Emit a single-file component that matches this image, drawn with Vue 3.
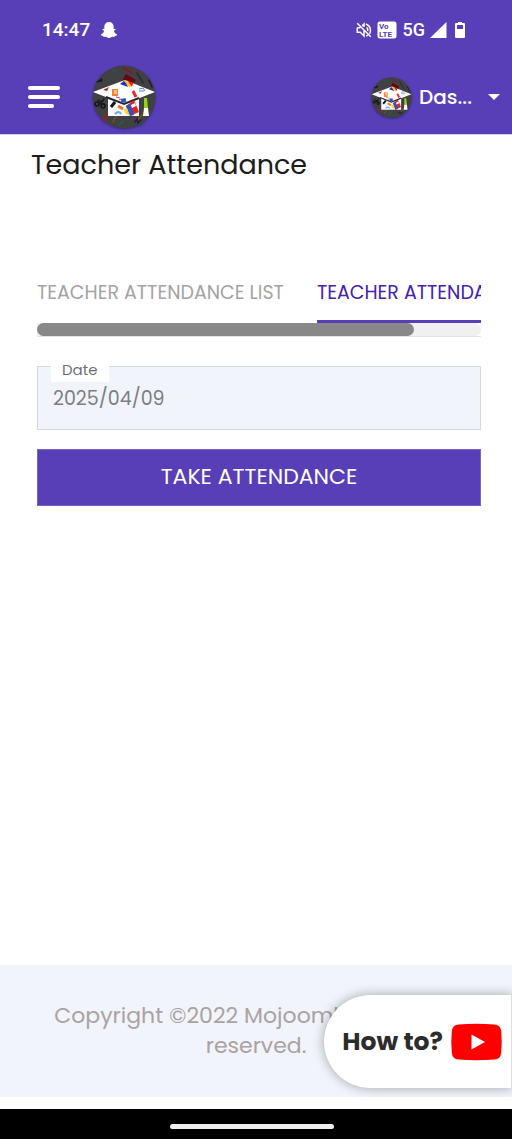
<script setup>
import { ref } from 'vue'

const tabs = ['Teacher Attendance List', 'Teacher Attendance']
const active = ref(1)
const date = ref('2025/04/09')
</script>

<template>
  <div class="page">
    <svg class="defs" aria-hidden="true">
      <symbol id="school-logo" viewBox="0 0 64 64">
        <circle cx="32" cy="32" r="31.5" fill="#414143" />
        <g fill="none" stroke-width="1.5" stroke-linecap="round">
          <path d="M32 3l8 5" stroke="#8d1425" />
          <path d="M45 8l6 10" stroke="#292a2d" />
          <path d="M57 15l3 7M5 17l5-2" stroke="#202124" />
          <path d="M22 6l3-1M48 60l3-2" stroke="#11604e" />
          <path d="M18 43l-5 14M14 50l-3 4" stroke="#8b2528" />
          <path d="M26 48l-5 9M52 48l-7 8" stroke="#6d551e" />
          <path d="M31 56l-4 4" stroke="#18664d" />
          <path d="M6 35l7 5M12 34l-4 5" stroke="#151517" />
          <circle cx="5" cy="39" r="2" stroke="#151517" />
          <circle cx="11" cy="41" r="2" stroke="#151517" />
          <path d="M43 57l2-3 1 4 3-3" stroke="#231b38" />
        </g>
        <path d="M30 16l4-7 10 6-3 5z" fill="#62080e" />
        <path d="M6 16l4-3v4z" fill="#151517" />
        <path d="M16 32l16 7 15-7v19H16z" fill="#f7fafc" />
        <path d="M1 27l32-12 30 12-31 12z" fill="#fff" />
        <path d="M14 32l18 7 15-6" fill="none" stroke="#29292b" stroke-width="2" />
        <path d="M28 19l5-4 3 7z" fill="#1631c9" />
        <path d="M31 15l9 3-2 5z" fill="#ffc21c" />
        <path d="M35 15l6 3-1 4z" fill="#df1d1d" />
        <path d="M20 24h6v7h-6z" fill="#f58032" />
        <path d="M22 26h3m-3 2h3" stroke="#fff" />
        <path d="M11 25l6-3-2 4z" fill="#b82032" />
        <path d="M47 24l4-1 2 3m-6 0h5" fill="none" stroke="#4587d6" />
        <path d="M41 26l3 6" stroke="#df3131" stroke-width="3" />
        <path d="M29 36l5-1" stroke="#3454c5" stroke-width="4" />
        <path d="M24 32l4 1M27 35l2-1" stroke="#dc3c52" />
        <path d="M19 42l4-5" stroke="#151517" stroke-width="3" />
        <path d="M26 41l5 3" stroke="#ed7625" stroke-width="3" />
        <path d="M23 49q4-4 6 0" fill="none" stroke="#70a6dd" stroke-width="2" />
        <path d="M34 41l8-6 5 12-9 4z" fill="#df2428" />
        <path d="M34 41l4-2 4 11-4 1z" fill="#2453cf" />
        <path d="M32 44l3-1 3 8-5-3z" fill="#ffd52c" />
        <path d="M39 40l4-2 1 3-4 2z" fill="#fff" />
        <path d="M52 33h3l1 10h-4z" fill="#91d60a" />
        <path d="M52 43h4l1 8h-6z" fill="#f8fff5" />
      </symbol>
    </svg>

    <header class="top">
      <div class="status">
        <span class="clock">14:47</span>
        <svg class="ghost" viewBox="0 0 18 18" aria-hidden="true">
          <path d="M9 1c3 0 4.700 2 4.700 5v2l1.500-.2.500 1-1.800 1c.4 2 1.500 3 3.200 3.700l-.3 1-2 .4-.5 1-2.200-.2C11.200 16 10.200 17 9 17s-2.200-1-3.100-1.300l-2.200.2-.5-1-2-.4-.3-1c1.700-.7 2.800-1.700 3.200-3.700l-1.800-1 .5-1 1.500.2V6C4.300 3 6 1 9 1z" fill="#fff" />
        </svg>
        <span class="fill"></span>
        <svg class="mute" viewBox="0 0 24 24" fill="none" stroke="#fff" stroke-width="2" aria-hidden="true">
          <path d="M3 9v6h4l5 5v-8M12 8V4L9.500 6.500M3 9h4M3 3l18 18M15.500 8.500q2 1.500 1.500 5M14.500 4c6 2 7.500 8 5 13M15 20l2-1" />
        </svg>
        <svg class="volte" viewBox="0 0 20 18" aria-hidden="true">
          <rect x="0.500" y="0.500" width="19" height="17" rx="2.500" fill="#fff" />
          <text x="2" y="8">Vo</text>
          <text x="2" y="16">LTE</text>
        </svg>
        <span class="net">5G</span>
        <svg class="signal" viewBox="0 0 18 18" aria-hidden="true"><path d="M17.500 1v16H1z" fill="#fff" /></svg>
        <svg class="battery" viewBox="0 0 12 18" aria-hidden="true">
          <path d="M4 1h4v1h2q1 0 1 1v13q0 1-1 1H2q-1 0-1-1V3q0-1 1-1h2z" fill="#fff" />
          <path d="M3 4h6v4H3z" fill="#583fb8" />
        </svg>
      </div>
      <div class="bar">
        <button class="menu" type="button" aria-label="Menu"><i></i><i></i><i></i></button>
        <svg class="logo" role="img" aria-label="School logo"><use href="#school-logo" /></svg>
        <span class="fill"></span>
        <button class="user" type="button">
          <svg class="avatar" aria-hidden="true"><use href="#school-logo" /></svg>
          <span>Das...</span>
          <i class="caret"></i>
        </button>
      </div>
    </header>

    <main class="main">
      <h1>Teacher Attendance</h1>
      <section class="content">
        <div class="tabs">
          <nav class="tablist">
            <button
              v-for="(tab, i) in tabs"
              :key="tab"
              type="button"
              :class="['tab', { active: i === active }]"
              @click="active = i"
            >{{ tab }}</button>
          </nav>
          <div class="track"><div class="thumb"></div></div>
        </div>
        <div class="field">
          <label for="date">Date</label>
          <input id="date" v-model="date" type="text" />
        </div>
        <button class="take" type="button">TAKE ATTENDANCE</button>
      </section>
    </main>

    <footer class="footer">
      <p>Copyright ©2022 Mojoomla. All rights reserved.</p>
      <a class="howto" href="#how-to">
        <span>How to?</span>
        <svg class="youtube" viewBox="0 0 52 38" aria-hidden="true">
          <path d="M8 1.500Q26 0 44 1.500q6 .5 6.700 6.500 1 11 0 22-.7 6-6.700 6.500-18 1.500-36 0-6-.5-6.700-6.500-1-11 0-22Q2 2 8 1.500z" fill="#f00" />
          <path d="M21 11.500v15L34.500 19z" fill="#fff" />
        </svg>
      </a>
    </footer>
    <div class="gesture"><i></i></div>
  </div>
</template>

<style>
body { margin: 0; background: #fff; }
</style>

<style scoped>
* { box-sizing: border-box; }
.page {
  display: flex;
  flex-direction: column;
  min-height: 100vh;
  font-family: Poppins, Inter, "Open Sans", sans-serif;
  color: #1c1c1c;
}
button, input { margin: 0; padding: 0; border: 0; background: none; font: inherit; color: inherit; }
.defs { position: absolute; width: 0; height: 0; }
.fill { flex: 1; }
.top { background: #583fb8; color: #fff; border-bottom: 1px solid #d5cfec; }
.status {
  display: flex;
  align-items: center;
  height: 60px;
  padding: 0 46px 0 42px;
  font: 500 19px/24px Roboto, sans-serif;
}
.ghost { width: 18px; height: 18px; margin-left: 10px; }
.mute { width: 18px; height: 18px; margin-right: 4px; }
.volte { width: 20px; height: 18px; margin-right: 6px; }
.volte text { font: 700 8px Roboto, sans-serif; fill: #583fb8; }
.net { font-size: 18px; margin-right: 4px; }
.signal { width: 18px; height: 18px; margin-right: 7px; }
.battery { width: 12px; height: 18px; }
.bar { display: flex; align-items: center; height: 74px; padding: 0 12px 0 28px; }
.menu { display: flex; flex-direction: column; gap: 5px; width: 32px; margin-right: 32px; }
.menu i { height: 4px; border-radius: 2px; background: #fff; }
.menu i:last-child { width: 26px; }
.logo { width: 64px; height: 64px; filter: drop-shadow(0 1px 1px #0005); }
.user { display: flex; align-items: center; font-size: 20px; font-weight: 500; line-height: 30px; }
.avatar { width: 41px; height: 41px; margin-right: 7px; filter: drop-shadow(0 1px 1px #0005); }
.caret { margin-left: 16px; border: 6px solid transparent; border-top-color: #fff; border-bottom: 0; }

.main { flex: 1; padding: 9px 31px 0; }
h1 { margin: 0; font-size: 27px; line-height: 42px; font-weight: 400; }
.content { padding: 79px 0 0 6px; }
.tablist { display: flex; gap: 33px; overflow: hidden; }
.tab {
  flex: none;
  height: 58px;
  border-bottom: 3px solid transparent;
  font-size: 19px;
  font-weight: 400;
  text-transform: uppercase;
  white-space: nowrap;
  color: #a4a4a4;
}
.tab.active { color: #4421b4; border-bottom-color: #583fb8; }
.track { height: 13px; border-radius: 0 7px 7px 0; background: #f0f0f0; }
.thumb { width: 85%; height: 100%; border-radius: 7px; background: #888; }
.tabs { border-bottom: 1px solid #e4e4e4; }
.field { position: relative; margin-top: 29px; }
.field label {
  position: absolute;
  top: -8px;
  left: 14px;
  padding: 0 11px;
  background: #fff;
  font-size: 15px;
  line-height: 24px;
  color: #6c6f75;
}
.field input {
  display: block;
  width: 100%;
  height: 64px;
  padding: 0 15px;
  border: 1px solid #d3d8e1;
  border-radius: 0;
  background: #f1f4fa;
  font-size: 19px;
  color: #7c7f83;
}
.take {
  display: block;
  width: 100%;
  height: 57px;
  margin-top: 19px;
  padding-bottom: 2px;
  border: 1px solid #7963c8;
  background: #583fb8;
  color: #fff;
  font-size: 22px;
}
.footer { position: relative; overflow: hidden; height: 132px; padding: 36px 50px; background: #f1f4fa; }
.footer p { margin: 0; font-size: 22px; line-height: 30px; text-align: center; color: #aba2a2; }
.howto {
  position: absolute;
  top: 30px;
  right: 0;
  display: flex;
  align-items: center;
  gap: 7px;
  height: 93px;
  padding: 0 8px 0 18px;
  border-right: 1px solid #ddd;
  border-radius: 47px 0 0 47px;
  background: #fff;
  box-shadow: 0 0 12px #0005;
  color: #2c2c2c;
  font-size: 25px;
  font-weight: 700;
  text-decoration: none;
}
.youtube { width: 53px; height: 38px; }
.gesture {
  display: flex;
  justify-content: center;
  align-items: center;
  height: 30px;
  margin-top: 12px;
  padding: 5px 8px 0 0;
  background: #000;
}
.gesture i { width: 164px; height: 5px; border-radius: 3px; background: #eee; }
</style>
